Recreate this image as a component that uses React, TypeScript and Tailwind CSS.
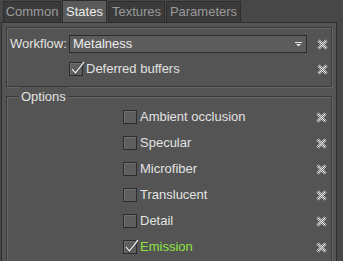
const FONT = { fontFamily: '"Liberation Sans", Arial, sans-serif' };

function ResetIcon() {
  return (
    <svg width="11" height="11" viewBox="0 0 11 11" className="block">
      <defs>
        <pattern id="chk" width="2" height="2" patternUnits="userSpaceOnUse">
          <rect width="2" height="2" fill="#7a7a7a" />
          <rect width="1" height="1" fill="#f2f2f2" />
          <rect x="1" y="1" width="1" height="1" fill="#f2f2f2" />
        </pattern>
      </defs>
      <path d="M1.5 1.5 L9.5 9.5 M9.5 1.5 L1.5 9.5" stroke="url(#chk)" strokeWidth="3" />
    </svg>
  );
}

function CheckBox({ checked }: { checked?: boolean }) {
  return (
    <div className="relative w-[14px] h-[14px] border border-[#2c2c2c] bg-[#5e5e5e] shadow-[inset_1px_1px_0_#707070] shrink-0">
      {checked && (
        <svg width="16" height="16" viewBox="0 0 16 16" className="absolute left-[0px] top-[-3px]">
          <path d="M2 9 L5.5 13 L14 2" fill="none" stroke="#3a3a3a" strokeWidth="2.6" />
          <path d="M2 9 L5.5 13 L14 2" fill="none" stroke="#e6e6e6" strokeWidth="1.4" />
        </svg>
      )}
    </div>
  );
}

function Tab({ label, width, active }: { label: string; width: string; active?: boolean }) {
  return (
    <div
      className={`${width} flex items-center justify-center text-[13px] border border-b-0 border-[#2e2e2e] ${
        active ? "bg-[#5a5a5a] text-[#ececec] h-[22px]" : "bg-[#3b3b3b] text-[#9a9a9a] h-[21px]"
      }`}
    >
      {label}
    </div>
  );
}

function OptionRow({ label, checked, green }: { label: string; checked?: boolean; green?: boolean }) {
  return (
    <div className="h-[26px] flex items-center">
      <div className="w-[113px]" />
      <CheckBox checked={checked} />
      <span className={`ml-[3px] flex-1 text-[13px] ${green ? "text-[#8ee53f]" : "text-[#e2e2e2]"}`}>
        {label}
      </span>
      <div className="w-[15px]">
        <ResetIcon />
      </div>
    </div>
  );
}

export default function App() {
  const options = [
    { label: "Ambient occlusion" },
    { label: "Specular" },
    { label: "Microfiber" },
    { label: "Translucent" },
    { label: "Detail" },
    { label: "Emission", checked: true, green: true },
  ];

  return (
    <div className="w-[343px] h-[261px] overflow-hidden bg-[#474747] flex flex-col" style={FONT}>
      {/* tab bar */}
      <div className="flex items-end pl-[3px] gap-[1px] h-[22px]">
        <Tab label="Common" width="w-[58px]" />
        <Tab label="States" width="w-[45px]" active />
        <Tab label="Textures" width="w-[57px]" />
        <Tab label="Parameters" width="w-[75px]" />
      </div>

      {/* page */}
      <div className="flex-1 w-[336px] ml-[1px] border border-b-0 border-[#2e2e2e] bg-[#545454] pt-[4px] px-[4px]">
        <div className="border border-[#3a3a3a] shadow-[1px_1px_0_#666,inset_1px_1px_0_#666] pl-[3px] pt-[7px] pb-[4px]">
          <div className="flex items-center h-[18px]">
            <span className="text-[13px] text-[#e2e2e2] w-[59px]">Workflow:</span>
            <div className="flex-1 h-[18px] border border-[#2c2c2c] bg-[#5c5c5c] flex items-center px-[3px] text-[13px] text-[#ececec]">
              <span className="flex-1">Metalness</span>
              <svg width="7" height="5" viewBox="0 0 7 5" className="mr-[1px]">
                <rect x="0" y="0" width="7" height="1" fill="#e6e6e6" />
                <path d="M1 2 L6 2 L3.5 4.5 Z" fill="#e6e6e6" />
              </svg>
            </div>
            <div className="w-[24px] pl-[10px]">
              <ResetIcon />
            </div>
          </div>
          <div className="flex items-center h-[26px] mt-[3px]">
            <div className="w-[59px]" />
            <CheckBox checked />
            <span className="ml-[3px] flex-1 text-[13px] text-[#e2e2e2]">Deferred buffers</span>
            <div className="w-[24px] pl-[10px]">
              <ResetIcon />
            </div>
          </div>
        </div>

        <div className="relative mt-[9px] border border-[#3a3a3a] shadow-[1px_1px_0_#666,inset_1px_1px_0_#666] pl-[3px] pt-[7px] h-[200px]">
          <span className="absolute left-[12px] top-[-10px] bg-[#545454] px-[2px] text-[13px] text-[#e2e2e2]">
            Options
          </span>
          {options.map((o) => (
            <OptionRow key={o.label} {...o} />
          ))}
        </div>
      </div>
    </div>
  );
}
